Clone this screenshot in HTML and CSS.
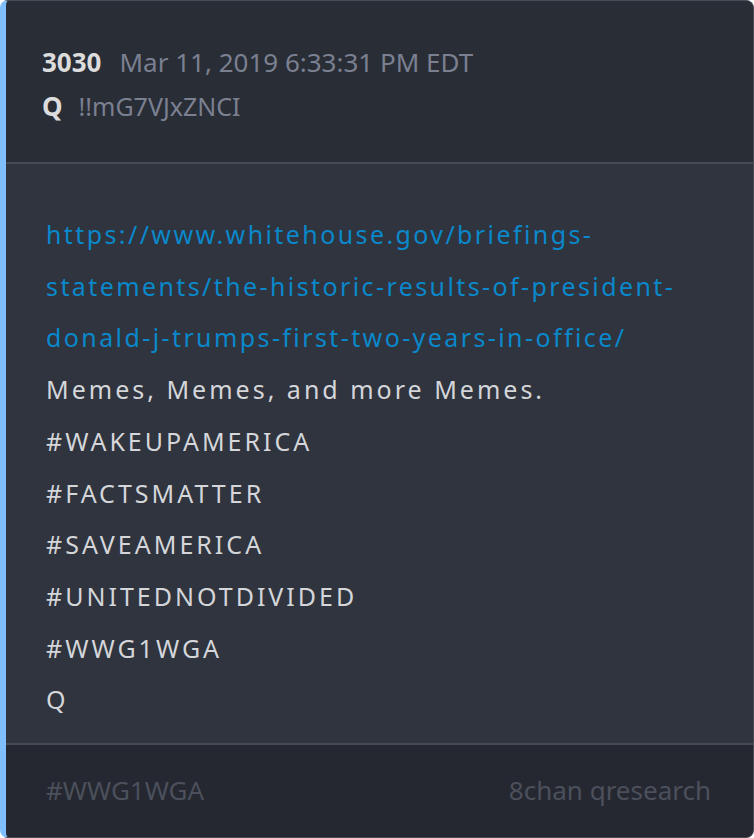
FILE: index.html
```html
<!DOCTYPE html>
<html>
<head>
<meta charset="utf-8">
<link rel="stylesheet" href="styles.css">
</head>
<body>
<article class="post">
  <header class="post-head">
    <div class="head-line"><span class="num">3030</span><span class="meta">Mar 11, 2019 6:33:31 PM EDT</span></div>
    <div class="head-line"><span class="num">Q</span><span class="meta id">!!mG7VJxZNCI</span></div>
  </header>
  <section class="post-body">
    <a class="link" href="#">https://www.whitehouse.gov/briefings-statements/the-historic-results-of-president-donald-j-trumps-first-two-years-in-office/</a>
    <p class="line">Memes, Memes, and more Memes.</p>
    <p class="line">#WAKEUPAMERICA</p>
    <p class="line">#FACTSMATTER</p>
    <p class="line">#SAVEAMERICA</p>
    <p class="line">#UNITEDNOTDIVIDED</p>
    <p class="line">#WWG1WGA</p>
    <p class="line">Q</p>
  </section>
  <footer class="post-foot">
    <span>#WWG1WGA</span>
    <span>8chan qresearch</span>
  </footer>
</article>
</body>
</html>
```
FILE: styles.css
```css
html, body {
  margin: 0;
  padding: 0;
  background: #ffffff;
}
body {
  font-family: "Noto Sans", "Open Sans", sans-serif;
}
.post {
  box-sizing: border-box;
  width: 754px;
  height: 838px;
  display: flex;
  flex-direction: column;
  border: 1px solid #474c56;
  border-left: 6px solid #80bfff;
  border-radius: 8px;
  overflow: hidden;
  background: #2f343e;
}
.post-head {
  background: #292d36;
  padding: 39px 36px 34px;
  border-bottom: 2px solid #454a54;
}
.head-line {
  display: flex;
  align-items: baseline;
  gap: 18px;
  height: 44px;
  line-height: 44px;
  font-size: 26px;
}
.head-line .id {
  margin-left: -2px;
  font-size: 25px;
}
.num {
  color: #dcdcdc;
  font-weight: 700;
}
.meta {
  color: #7b8091;
}
.post-body {
  flex: 1;
  padding: 45px 40px 0;
  font-size: 25px;
  letter-spacing: 3px;
  line-height: 51.7px;
}
.link {
  display: block;
  color: #0a88cb;
  text-decoration: none;
  letter-spacing: 2.4px;
}
.line {
  margin: 0;
  color: #d4d6da;
}
.post-foot {
  background: #252830;
  border-top: 2px solid #454a54;
  height: 94px;
  box-sizing: border-box;
  padding: 0 42px 2px 40px;
  display: flex;
  align-items: center;
  justify-content: space-between;
  font-size: 26px;
  color: #4b505c;
}
```
